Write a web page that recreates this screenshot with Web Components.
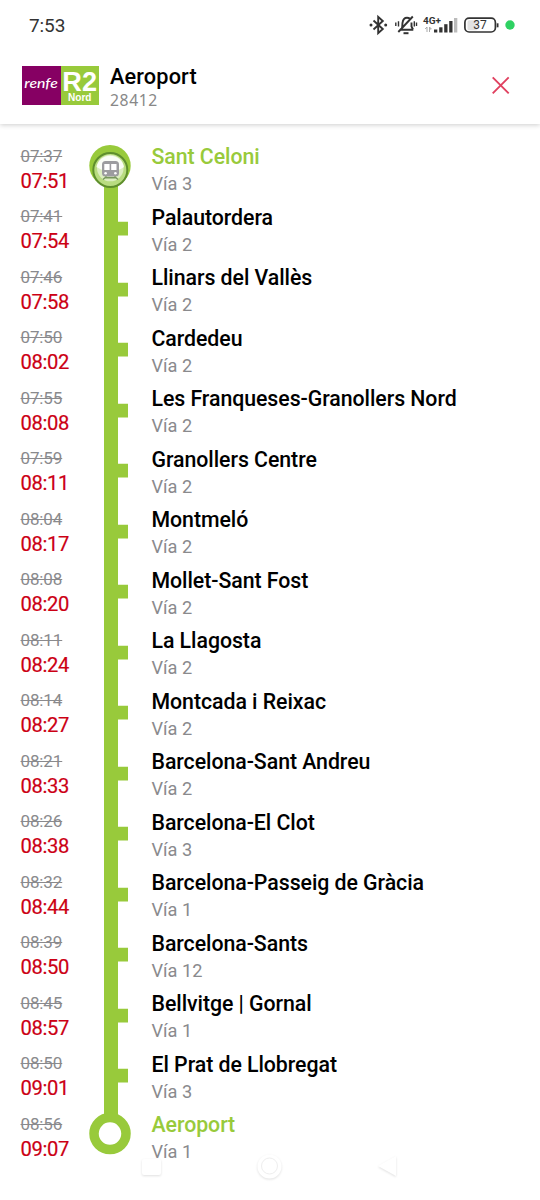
<!DOCTYPE html>
<html lang="ca">
<head>
<meta charset="utf-8">
<title>Aeroport 28412</title>
<style>
body{margin:0;background:#fff;font-family:Roboto,"Noto Sans",sans-serif;overflow:hidden}
</style>
</head>
<body>
<train-app></train-app>
<script>
const define = (name, html, setup) => customElements.define(name, class extends HTMLElement {
  connectedCallback() {
    if (this.shadowRoot) return;
    const t = document.createElement('template');
    t.innerHTML = html;
    this.attachShadow({mode: 'open'}).append(t.content.cloneNode(true));
    if (setup) setup(this, this.shadowRoot);
  }
});

define('status-bar', `
<style>
:host{display:flex;height:50px;box-sizing:border-box;padding:0 0 0 29px;align-items:center;justify-content:space-between;color:#333}
.time{font-size:19px;line-height:22px;letter-spacing:-.1px;padding-top:1px}
svg{display:block;width:190px;height:50px;flex:none}
</style>
<span class="time">7:53</span>
<svg viewBox="350 0 190 50" fill="none" stroke="#333" stroke-width="1.9">
  <path d="M373.500 20.500l9.300 8.500-4.600 4.200V16.800l4.600 4.200-9.300 8.500"/>
  <g fill="#333" stroke="none"><circle cx="371" cy="25" r="1.500"/><circle cx="385.700" cy="25" r="1.500"/></g>
  <path d="M399.800 29.800h13.500M401.800 28.500c.8-2 .4-4 .7-5.700.5-3.300 2.300-5.100 4.500-5.100 1.200 0 2 .3 2.800.9M411.500 22.500v4l1.500 3M398.300 32l14.500-15.500"/>
  <path d="M395.800 22.500v3.500M398.500 21.300v5.200M414.300 21.300v5.200M416.500 22.500v3.500" stroke-width="1.400"/>
  <path d="M403.500 33.200h5" stroke-width="2"/>
  <text x="423" y="24" font-family="Roboto" font-size="9.800" font-weight="700" fill="#333" stroke="none" textLength="18" lengthAdjust="spacingAndGlyphs">4G+</text>
  <path d="M427 32v-5l-1.800 2M429.500 32v-5l1.800 2h-2" stroke="#aaa" stroke-width="1"/>
  <g fill="#333" stroke="none"><rect x="434" y="29.500" width="3.300" height="3"/><rect x="439.200" y="27.300" width="3.300" height="5.200"/><rect x="444.200" y="24.200" width="3.300" height="8.300"/><rect x="449.200" y="21" width="3.300" height="11.500"/><rect x="454" y="18" width="3.300" height="14.500" fill="#bbb"/></g>
  <rect x="467.500" y="20.300" width="10" height="10" rx="1.500" fill="#e2e2e2" stroke="none"/>
  <rect x="464.900" y="18.200" width="30.500" height="13.800" rx="4.200" stroke-width="1.700"/>
  <path d="M497.600 23.300v4" stroke-width="1.800"/>
  <text x="480" y="29.300" text-anchor="middle" font-family="Roboto" font-size="12" fill="#333" stroke="none">37</text>
  <circle cx="510" cy="25" r="4.700" fill="#2fd162" stroke="none"/>
</svg>`);

define('line-logo', `
<style>
:host{display:grid;grid-template-columns:1fr 1fr;width:77px;height:39px}
svg{display:block;width:100%;height:39px}
.renfe{background:#860063}.line{background:#98ca3b}
</style>
<div class="renfe"><svg viewBox="0 0 38.500 39"><text x="2.300" y="22.300" font-family="Lato" font-style="italic" font-size="12.500" font-weight="500" fill="#fff" textLength="33.500" lengthAdjust="spacingAndGlyphs">renfe</text></svg></div>
<div class="line"><svg viewBox="0 0 38.500 39"><g fill="#fff" font-family="Liberation Sans" font-weight="700"><text x="1.300" y="24.500" font-size="27.500" textLength="34.700" lengthAdjust="spacingAndGlyphs">R2</text><text x="7" y="35" font-size="10" textLength="23.500" lengthAdjust="spacingAndGlyphs">Nord</text></g></svg></div>`);

define('trip-header', `
<style>
:host{display:flex;height:74px;box-sizing:border-box;padding:16px 30px 0 22px;align-items:flex-start;background:#fff;box-shadow:0 1px 5px rgba(0,0,0,.2);clip-path:inset(0 0 -10px 0)}
.title{flex:1;margin:-2.500px 0 0 11px;display:flex;flex-direction:column}
.name{font-size:21.700px;line-height:26px;font-weight:500;letter-spacing:.15px;color:#000}
.number{font:15.700px/22px "Noto Sans",sans-serif;letter-spacing:.6px;margin-top:-.5px;color:#888}
svg{display:block;margin-top:9px}
</style>
<line-logo></line-logo>
<div class="title"><span class="name"></span><span class="number"></span></div>
<svg width="20" height="20" viewBox="0 0 20 20"><path d="M2.700 2.300l16 16M18.700 2.300l-16 16" stroke="#e0405f" stroke-width="1.900"/></svg>`,
(host, root) => {
  root.querySelector('.name').textContent = host.getAttribute('destination');
  root.querySelector('.number').textContent = host.getAttribute('number');
});

define('track-mark', `
<style>:host{display:block;width:44px;height:60.500px}svg{display:block;overflow:visible}</style>
<svg width="44" height="60.500" viewBox="0 0 44 60.500"></svg>`,
(host, root) => {
  const kind = host.getAttribute('kind'), g = '#98ca3b';
  root.querySelector('svg').innerHTML = {
    first: `<path d="M16 28h14v34h-14z" fill="${g}"/><circle cx="22" cy="27.700" r="20.700" fill="${g}"/>
      <circle cx="22.300" cy="32" r="17" fill="#b9dc80" stroke="#5f8f2c" stroke-width="2"/>
      <circle cx="22.300" cy="30" r="13.300" fill="#fff" opacity=".5"/><path d="M8.500 29a14 14 0 0 1 27.500 0q-13 9-27.500 0z" fill="#fff" opacity=".85"/>
      <rect x="14" y="23" width="17" height="15.500" rx="3.500" fill="#9c9c9f"/><path d="M16.300 26h5.300v6h-5.300zM23.200 26h5.300v6h-5.300z" fill="#fff"/>
      <circle cx="17.600" cy="35.300" r="1.300" fill="#fff"/><circle cx="27.400" cy="35.300" r="1.300" fill="#fff"/>
      <path d="M18.500 38.500l-3.500 3M26.500 38.500l3.500 3M17 39.700h11" stroke="#77965d" stroke-width="1.500"/>`,
    last: `<path d="M16-2h14v22h-14z" fill="${g}"/><circle cx="22" cy="27.600" r="16" fill="#fff" stroke="${g}" stroke-width="9.500"/>`,
    mid: `<path d="M16-2h14v25.700h10v13.700h-10V62h-14z" fill="${g}"/>`
  }[kind];
});

define('trip-stop', `
<style>
:host{display:grid;grid-template-columns:67.500px 44px 1fr;height:60.500px;padding-left:20.500px;box-sizing:border-box}
.times,.place{display:flex;flex-direction:column}
.old{font-size:17px;line-height:22px;margin-top:6.800px;letter-spacing:-.12px;color:#8a8a8d;text-decoration:line-through;text-decoration-thickness:1px}
.new{font-size:20.200px;line-height:26px;margin-top:1.300px;letter-spacing:-.35px;color:#cc0014;-webkit-text-stroke:.2px #cc0014}
.place{padding-left:19.500px}
.name{font-size:21.300px;line-height:26px;margin-top:6.200px;letter-spacing:-.05px;font-weight:500;color:#000;white-space:nowrap}
.via{font-size:18.200px;line-height:22px;margin-top:3.200px;color:#8a8a8d}
:host([end]) .name{color:#98ca3b}
</style>
<div class="times"><span class="old"></span><span class="new"></span></div>
<slot name="mark"></slot>
<div class="place"><span class="name"><slot></slot></span><span class="via"></span></div>`,
(host, root) => {
  root.querySelector('.old').textContent = host.getAttribute('planned');
  root.querySelector('.new').textContent = host.getAttribute('expected');
  root.querySelector('.via').textContent = 'Vía ' + host.getAttribute('via');
});

const stops = [
['07:37','07:51','Sant Celoni',3],['07:41','07:54','Palautordera',2],['07:46','07:58','Llinars del Vallès',2],
['07:50','08:02','Cardedeu',2],['07:55','08:08','Les Franqueses-Granollers Nord',2],['07:59','08:11','Granollers Centre',2],
['08:04','08:17','Montmeló',2],['08:08','08:20','Mollet-Sant Fost',2],['08:11','08:24','La Llagosta',2],
['08:14','08:27','Montcada i Reixac',2],['08:21','08:33','Barcelona-Sant Andreu',2],['08:26','08:38','Barcelona-El Clot',3],
['08:32','08:44','Barcelona-Passeig de Gràcia',1],['08:39','08:50','Barcelona-Sants',12],['08:45','08:57','Bellvitge | Gornal',1],
['08:50','09:01','El Prat de Llobregat',3],['08:56','09:07','Aeroport',1]];

define('stop-list', `
<style>
:host{display:flex;flex-direction:column;padding-top:13.900px}
</style>`,
(host, root) => {
  stops.forEach(([planned, expected, name, via], i) => {
    const end = i === 0 || i === stops.length - 1;
    const s = document.createElement('trip-stop');
    s.setAttribute('planned', planned); s.setAttribute('expected', expected); s.setAttribute('via', via);
    if (end) s.setAttribute('end', '');
    const m = document.createElement('track-mark');
    m.slot = 'mark';
    m.setAttribute('kind', i === 0 ? 'first' : end ? 'last' : 'mid');
    s.append(name, m);
    root.append(s);
  });
});

define('nav-bar', `
<style>:host{position:absolute;left:0;top:1145px;width:540px;height:50px;display:block;pointer-events:none}svg{display:block;filter:drop-shadow(0 1px 1px rgba(0,0,0,.12))}</style>
<svg width="540" height="50" viewBox="0 1145 540 50" fill="#fff"><rect x="142" y="1159" width="19" height="16" rx="2"/><circle cx="269.500" cy="1166.500" r="12"/><circle cx="269.500" cy="1166" r="8" fill="none" stroke="#eee" stroke-width="1"/><path d="M396 1156v20l-18-10z"/></svg>`);

define('train-app', `
<style>:host{display:flex;flex-direction:column;position:relative;width:540px;height:1200px;background:#fff;overflow:hidden}</style>
<status-bar></status-bar>
<trip-header destination="Aeroport" number="28412"></trip-header>
<stop-list></stop-list>
<nav-bar></nav-bar>`);
</script>
</body>
</html>
